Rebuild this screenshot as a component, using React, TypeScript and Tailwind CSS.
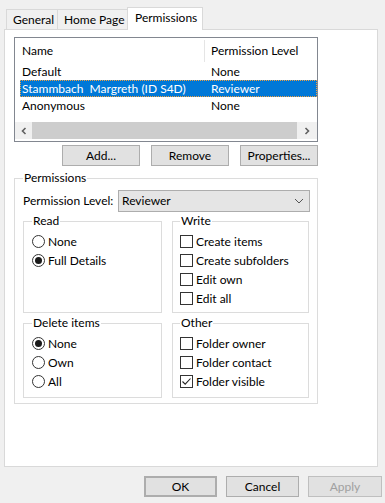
import React from "react";

const font = { fontFamily: 'Lato, "Noto Sans", sans-serif' };

function Radio({ checked, label }: { checked?: boolean; label: string }) {
  return (
    <div className="flex items-center h-[19px]">
      <span className="w-[13px] h-[13px] rounded-full border border-[#333333] bg-white flex items-center justify-center">
        {checked && <span className="w-[7px] h-[7px] rounded-full bg-[#1a1a1a]" />}
      </span>
      <span className="ml-[3px] leading-none">{label}</span>
    </div>
  );
}

function Check({ checked, label }: { checked?: boolean; label: string }) {
  return (
    <div className="flex items-center h-[19px]">
      <span className="w-[13px] h-[13px] border border-[#333333] bg-white flex items-center justify-center">
        {checked && (
          <svg width="11" height="11" viewBox="0 0 11 11">
            <path d="M1.5 5.5 L4.2 8.2 L9.5 2.5" fill="none" stroke="#222" strokeWidth="1.1" />
          </svg>
        )}
      </span>
      <span className="ml-[3px] leading-none">{label}</span>
    </div>
  );
}

function Group({
  title,
  width,
  height,
  children,
  className = "",
}: {
  title: string;
  width: string;
  height: string;
  children: React.ReactNode;
  className?: string;
}) {
  return (
    <fieldset className={`border border-[#dcdcdc] pr-0 shrink-0 ${width} ${height} ${className}`}>
      <legend className="px-px h-[16px] leading-[16px]">{title}</legend>
      {children}
    </fieldset>
  );
}

function Btn({ children, w, className = "" }: { children: React.ReactNode; w: string; className?: string }) {
  return (
    <div
      className={`${w} h-[21px] flex items-center justify-center border border-[#adadad] bg-[#e1e1e1] ${className}`}
    >
      {children}
    </div>
  );
}

export default function App() {
  return (
    <div
      className="w-[385px] h-[503px] bg-[#f0f0f0] text-[12px] text-black flex flex-col overflow-hidden whitespace-nowrap"
      style={font}
    >
      {/* tabs */}
      <div className="h-[29px] flex items-end pl-[6px]">
        <div className="w-[52px] h-[20px] border border-b-0 border-[#d9d9d9] flex items-center pl-[6px]">
          General
        </div>
        <div className="w-[70px] h-[20px] border border-l-0 border-b-0 border-[#d9d9d9] flex items-center pl-[6px]">
          Home Page
        </div>
        <div className="relative top-px z-10 ml-[-1px] w-[76px] h-[23px] bg-white border border-b-0 border-[#d9d9d9] flex items-center pl-[7px] pb-[2px]">
          Permissions
        </div>
      </div>

      {/* page */}
      <div className="ml-[4px] w-[374px] h-[438px] bg-white border border-[#d9d9d9] flex flex-col pl-[9px]">
        {/* list view */}
        <div className="mt-[7px] w-[304px] h-[105px] border border-[#828790] flex flex-col">
          <div className="h-[25px] flex items-center">
            <span className="pl-[7px] w-[189px]">Name</span>
            <span className="w-px h-[22px] bg-[#e5e5e5]" />
            <span className="pl-[6px]">Permission Level</span>
          </div>
          <div className="h-[17px] flex items-center">
            <span className="pl-[7px] w-[196px]">Default</span>
            <span>None</span>
          </div>
          <div className="h-[17px] flex items-center bg-[#0078d7] text-white ml-[5px] outline outline-1 outline-dotted outline-[#f0a040] -outline-offset-1">
            <span className="pl-[2px] w-[191px] whitespace-pre">Stammbach  Margreth (ID S4D)</span>
            <span>Reviewer</span>
          </div>
          <div className="h-[17px] flex items-center">
            <span className="pl-[7px] w-[196px]">Anonymous</span>
            <span>None</span>
          </div>
          <div className="flex-1" />
          <div className="h-[17px] mb-[2px] flex items-center bg-[#f0f0f0]">
            <div className="w-[17px] h-full flex items-center justify-center">
              <svg width="8" height="8" viewBox="0 0 8 8">
                <path d="M5.5 1 L2.5 4 L5.5 7" fill="none" stroke="#606060" strokeWidth="1.6" />
              </svg>
            </div>
            <div className="flex-1 h-full bg-[#cdcdcd]" />
            <div className="w-[20px] h-full flex items-center justify-center">
              <svg width="8" height="8" viewBox="0 0 8 8">
                <path d="M2.5 1 L5.5 4 L2.5 7" fill="none" stroke="#606060" strokeWidth="1.6" />
              </svg>
            </div>
          </div>
        </div>

        {/* buttons */}
        <div className="mt-[3px] w-[304px] flex justify-end gap-[11px]">
          <Btn w="w-[78px]">Add...</Btn>
          <Btn w="w-[78px]">Remove</Btn>
          <Btn w="w-[78px]">Properties...</Btn>
        </div>

        {/* permissions group */}
        <Group title="Permissions" width="w-[304px]" height="h-[234px]" className="mt-[4px] pl-[8px]">
          <div className="flex items-center mt-[4px]">
            <span className="w-[95px]">Permission Level:</span>
            <div className="w-[192px] h-[22px] border border-[#adadad] bg-[#e5e5e5] flex items-center pl-[3px] pr-[5px]">
              <span className="flex-1">Reviewer</span>
              <svg width="10" height="6" viewBox="0 0 10 6">
                <path d="M1 1 L5 5 L9 1" fill="none" stroke="#555" strokeWidth="1" />
              </svg>
            </div>
          </div>
          <div className="flex gap-[10px] mt-[1px]">
            <Group title="Read" width="w-[139px]" height="h-[100px]" className="pl-[8px]">
              <div className="mt-[3px]">
                <Radio label="None" />
                <Radio label="Full Details" checked />
              </div>
            </Group>
            <Group title="Write" width="w-[137px]" height="h-[100px]" className="pl-[7px]">
              <div className="mt-[3px]">
                <Check label="Create items" />
                <Check label="Create subfolders" />
                <Check label="Edit own" />
                <Check label="Edit all" />
              </div>
            </Group>
          </div>
          <div className="flex gap-[10px] mt-[2px]">
            <Group title="Delete items" width="w-[139px]" height="h-[83px]" className="pl-[8px]">
              <div className="mt-[3px]">
                <Radio label="None" checked />
                <Radio label="Own" />
                <Radio label="All" />
              </div>
            </Group>
            <Group title="Other" width="w-[137px]" height="h-[83px]" className="pl-[7px]">
              <div className="mt-[3px]">
                <Check label="Folder owner" />
                <Check label="Folder contact" />
                <Check label="Folder visible" checked />
              </div>
            </Group>
          </div>
        </Group>
      </div>

      {/* bottom buttons */}
      <div className="mt-[9px] pl-[144px] flex gap-[9px]">
        <Btn w="w-[73px]" className="border-2 border-[#0078d7]">OK</Btn>
        <Btn w="w-[73px]">Cancel</Btn>
        <Btn w="w-[74px]" className="bg-[#cccccc] border-[#bfbfbf] text-[#a0a0a0]">Apply</Btn>
      </div>
    </div>
  );
}
